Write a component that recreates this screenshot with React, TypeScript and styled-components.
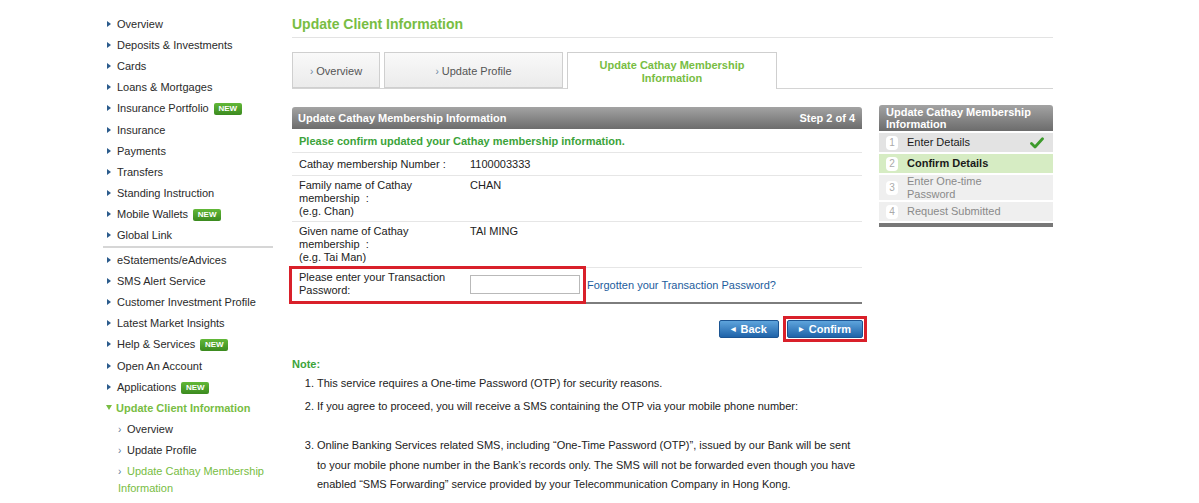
import React from 'react'
import styled, { createGlobalStyle } from 'styled-components'

const GlobalStyle = createGlobalStyle`
  html, body {
    margin: 0;
    padding: 0;
    background: #fff;
  }
  body {
    font-family: "Liberation Sans", Arial, Helvetica, sans-serif;
    font-size: 11px;
    color: #222;
  }
`

const colors = {
  green: '#78bd43',
  darkGreen: '#3ca33a',
  blue: '#1d5c9c',
  red: '#d9202a',
  navArrow: '#2b5b8c',
}

const Page = styled.div`
  display: flex;
  align-items: flex-start;
  gap: 19px;
  width: 1199px;
  height: 503px;
  padding-left: 103px;
  box-sizing: border-box;
  overflow: hidden;
`

/* ---------- sidebar ---------- */

const Sidebar = styled.nav`
  width: 170px;
  flex-shrink: 0;
  padding-top: 13px;
`

const NavItem = styled.div<{ $sub?: boolean; $active?: boolean; $open?: boolean }>`
  padding: ${p => (p.$sub ? 2 : 2.6)}px 0 ${p => (p.$sub ? 2 : 2.6)}px ${p => (p.$sub ? 15 : p.$open ? 3 : 4)}px;
  line-height: 16px;
  color: ${p => (p.$active || p.$open ? colors.green : '#2a2a2a')};
  font-weight: ${p => (p.$open ? 'bold' : 'normal')};
`

const NavArrow = styled.span`
  display: inline-block;
  width: 0;
  height: 0;
  border-left: 4px solid ${colors.navArrow};
  border-top: 3px solid transparent;
  border-bottom: 3px solid transparent;
  margin-right: 6px;
  vertical-align: 1px;
`

const NavArrowDown = styled.span`
  display: inline-block;
  width: 0;
  height: 0;
  border-top: 5px solid ${colors.green};
  border-left: 3.5px solid transparent;
  border-right: 3.5px solid transparent;
  margin-right: 4px;
  vertical-align: 2px;
`

const SubChevron = styled.span`
  display: inline-block;
  width: 9px;
  color: #5a7a9a;
  font-size: 10px;
`

const NavDivider = styled.div`
  height: 2px;
  margin-bottom: 1px;
  background: #d6d6d6;
`

const NewBadge = styled.span`
  display: inline-block;
  width: 28px;
  height: 12px;
  margin-left: 5px;
  vertical-align: 1px;
  border-radius: 2px;
  background: linear-gradient(#62b838, #3b8a1f);
  color: #fff;
  font-size: 8px;
  font-weight: bold;
  line-height: 12px;
  text-align: center;
`

/* ---------- main ---------- */

const Main = styled.main`
  width: 761px;
  flex-shrink: 0;
`

const Title = styled.h1`
  margin: 0;
  padding: 16px 0 4px;
  font-size: 14px;
  line-height: 17px;
  font-weight: bold;
  color: ${colors.green};
  border-bottom: 1px solid #e3e3e3;
`

const Tabs = styled.div`
  display: flex;
  align-items: flex-end;
  gap: 4px;
  margin-top: 14px;
  height: 36px;
  border-bottom: 1px solid #d4d4d4;
`

const Tab = styled.div<{ $width: number; $active?: boolean }>`
  width: ${p => p.$width}px;
  height: ${p => (p.$active ? 37 : 36)}px;
  box-sizing: border-box;
  margin-bottom: ${p => (p.$active ? -1 : 0)}px;
  display: flex;
  align-items: center;
  justify-content: center;
  text-align: center;
  border: 1px solid #cfcfcf;
  border-bottom: ${p => (p.$active ? 'none' : '1px solid #cfcfcf')};
  background: ${p => (p.$active ? '#fff' : 'linear-gradient(#f9f9f9, #ebebeb)')};
  color: ${p => (p.$active ? colors.green : '#555')};
  font-weight: ${p => (p.$active ? 'bold' : 'normal')};
  line-height: 13px;
  padding-top: ${p => (p.$active ? 1 : 2)}px;
`

const TabChevron = styled.span`
  color: #6b86a3;
  font-size: 10px;
  margin-right: 3px;
`

const Content = styled.div`
  display: flex;
  align-items: flex-start;
  gap: 17px;
  margin-top: 18px;
`

const LeftCol = styled.div`
  width: 570px;
  flex-shrink: 0;
`

const PanelHeader = styled.div`
  height: 22px;
  display: flex;
  align-items: center;
  justify-content: space-between;
  padding: 0 7px 0 6px;
  border-radius: 3px 3px 0 0;
  background: linear-gradient(#a3a3a3, #6c6c6c);
  color: #fff;
  font-weight: bold;
`

const ConfirmText = styled.div`
  padding: 6px 7px 4px;
  line-height: 13px;
  color: ${colors.darkGreen};
  font-weight: bold;
  border-bottom: 1px solid #e6e6e6;
`

const Row = styled.div<{ $padTop?: number; $padBottom?: number }>`
  display: flex;
  line-height: 13px;
  padding: ${p => p.$padTop ?? 3.5}px 0 ${p => p.$padBottom ?? 2.5}px;
  border-bottom: 1px solid #e6e6e6;
`

const Label = styled.div`
  width: 178px;
  flex-shrink: 0;
  box-sizing: border-box;
  padding: 0 11px 0 7px;
`

const Value = styled.div`
  flex: 1;
`

const PasswordRow = styled.div`
  display: flex;
  height: 34px;
  border-bottom: 2px solid #7d7d7d;
`

const Highlight = styled.div`
  display: flex;
  height: calc(100% + 4px);
  margin: -2px 0 0 -3px;
  padding-right: 3px;
  box-sizing: border-box;
  border: 3px solid ${colors.red};
  line-height: 13px;
`

const PasswordLabel = styled(Label)`
  padding-top: 2px;
`

const PasswordInput = styled.input`
  align-self: center;
  width: 110px;
  height: 19px;
  box-sizing: border-box;
  margin: 0;
  border: 1px solid #b9b9b9;
  background: #fff;
`

const ForgotLink = styled.a`
  align-self: center;
  margin-left: 1px;
  color: ${colors.blue};
  text-decoration: none;
  cursor: pointer;
`

const ButtonRow = styled.div`
  display: flex;
  justify-content: flex-end;
  align-items: center;
  margin-top: 12px;
`

const ButtonFrame = styled.div`
  display: flex;
  padding: 1px;
  margin: 0 -5px 0 4px;
  border: 3px solid ${colors.red};
`

const Button = styled.button`
  display: flex;
  align-items: center;
  gap: 5px;
  height: 18px;
  padding: 0 11px;
  border: 1px solid #1c5593;
  border-radius: 2px;
  background: linear-gradient(#5ea4dc, #1f63a9);
  color: #fff;
  font-family: inherit;
  font-size: 11px;
  font-weight: bold;
  cursor: pointer;
`

const ButtonArrow = styled.span`
  font-size: 6px;
`

const Note = styled.div`
  margin-top: 13px;
  line-height: 19.5px;
`

const NoteTitle = styled.div`
  color: ${colors.darkGreen};
  font-weight: bold;
`

const NoteList = styled.ol`
  margin: 0;
  padding-left: 25px;
`

const NoteItem = styled.li<{ $gap?: number }>`
  margin-bottom: ${p => p.$gap ?? 3.5}px;
`

/* ---------- step panel ---------- */

const StepPanel = styled.aside`
  width: 174px;
  flex-shrink: 0;
  margin-top: -2px;
`

const StepHeader = styled.div`
  padding: 1px 6px 1px 7px;
  border-radius: 3px 3px 0 0;
  background: linear-gradient(#a3a3a3, #6c6c6c);
  color: #fff;
  font-weight: bold;
  line-height: 12px;
`

type StepState = 'done' | 'current' | 'todo'

const Step = styled.div<{ $state: StepState }>`
  display: flex;
  align-items: center;
  min-height: 19px;
  box-sizing: border-box;
  margin-top: 2px;
  padding: 0 9px 0 7px;
  line-height: 12.5px;
  background: ${p => (p.$state === 'current' ? '#d6ecc3' : p.$state === 'done' ? '#e3e3e3' : '#efefef')};
  color: ${p => (p.$state === 'todo' ? '#8a8a8a' : '#1a1a1a')};
  font-weight: ${p => (p.$state === 'current' ? 'bold' : 'normal')};
`

const StepNum = styled.span`
  width: 12px;
  height: 14px;
  flex-shrink: 0;
  margin-right: 9px;
  border-radius: 4px;
  background: #fff;
  color: #aaa;
  font-size: 10px;
  font-weight: normal;
  line-height: 14px;
  text-align: center;
`

const StepLabel = styled.span`
  flex: 1;
  padding-right: 8px;
`

const StepCheck = styled.span`
  width: 14px;
  height: 12px;
  flex-shrink: 0;
  display: flex;
`

const StepFoot = styled.div`
  height: 4px;
  margin-top: 2px;
  background: #777;
`

const CheckIcon = () => (
  <svg width="14" height="12" viewBox="0 0 14 12">
    <path d="M1.5 6.5 L5 10 L12.5 1.8" fill="none" stroke="#3d9a2b" strokeWidth="2.8" strokeLinecap="round" strokeLinejoin="round" />
  </svg>
)

const mainNav: { label: string; isNew?: boolean }[] = [
  { label: 'Overview' },
  { label: 'Deposits & Investments' },
  { label: 'Cards' },
  { label: 'Loans & Mortgages' },
  { label: 'Insurance Portfolio', isNew: true },
  { label: 'Insurance' },
  { label: 'Payments' },
  { label: 'Transfers' },
  { label: 'Standing Instruction' },
  { label: 'Mobile Wallets', isNew: true },
  { label: 'Global Link' },
]

const serviceNav: { label: string; isNew?: boolean }[] = [
  { label: 'eStatements/eAdvices' },
  { label: 'SMS Alert Service' },
  { label: 'Customer Investment Profile' },
  { label: 'Latest Market Insights' },
  { label: 'Help & Services', isNew: true },
  { label: 'Open An Account' },
  { label: 'Applications', isNew: true },
]

const subNav = [
  { label: 'Overview' },
  { label: 'Update Profile' },
  { label: 'Update Cathay Membership Information', active: true },
]

const steps: { label: string; state: StepState }[] = [
  { label: 'Enter Details', state: 'done' },
  { label: 'Confirm Details', state: 'current' },
  { label: 'Enter One-time Password', state: 'todo' },
  { label: 'Request Submitted', state: 'todo' },
]

const App = () => {
  return (
    <>
      <GlobalStyle />
      <Page>
        <Sidebar>
          {mainNav.map(item => (
            <NavItem key={item.label}>
              <NavArrow />
              {item.label}
              {item.isNew && <NewBadge>NEW</NewBadge>}
            </NavItem>
          ))}
          <NavDivider />
          {serviceNav.map(item => (
            <NavItem key={item.label}>
              <NavArrow />
              {item.label}
              {item.isNew && <NewBadge>NEW</NewBadge>}
            </NavItem>
          ))}
          <NavItem $open>
            <NavArrowDown />
            Update Client Information
          </NavItem>
          {subNav.map(item => (
            <NavItem key={item.label} $sub $active={item.active}>
              <SubChevron>›</SubChevron>
              {item.label}
            </NavItem>
          ))}
          <NavItem>
            <NavArrow />
            Convert ATM Card
          </NavItem>
        </Sidebar>

        <Main>
          <Title>Update Client Information</Title>
          <Tabs>
            <Tab $width={88}>
              <span><TabChevron>›</TabChevron>Overview</span>
            </Tab>
            <Tab $width={179}>
              <span><TabChevron>›</TabChevron>Update Profile</span>
            </Tab>
            <Tab $width={210} $active>
              Update Cathay Membership
              <br />
              Information
            </Tab>
          </Tabs>

          <Content>
            <LeftCol>
              <PanelHeader>
                <span>Update Cathay Membership Information</span>
                <span>Step 2 of 4</span>
              </PanelHeader>
              <ConfirmText>Please confirm updated your Cathay membership information.</ConfirmText>
              <Row $padTop={4.5} $padBottom={4}>
                <Label>Cathay membership Number :</Label>
                <Value>1100003333</Value>
              </Row>
              <Row>
                <Label>
                  Family name of Cathay membership &nbsp;:
                  <br />
                  (e.g. Chan)
                </Label>
                <Value>CHAN</Value>
              </Row>
              <Row>
                <Label>
                  Given name of Cathay membership &nbsp;:
                  <br />
                  (e.g. Tai Man)
                </Label>
                <Value>TAI MING</Value>
              </Row>
              <PasswordRow>
                <Highlight>
                  <PasswordLabel>Please enter your Transaction Password:</PasswordLabel>
                  <PasswordInput type="password" />
                </Highlight>
                <ForgotLink>Forgotten your Transaction Password?</ForgotLink>
              </PasswordRow>

              <ButtonRow>
                <Button>
                  <ButtonArrow>◀</ButtonArrow>Back
                </Button>
                <ButtonFrame>
                  <Button>
                    <ButtonArrow>▶</ButtonArrow>Confirm
                  </Button>
                </ButtonFrame>
              </ButtonRow>

              <Note>
                <NoteTitle>Note:</NoteTitle>
                <NoteList>
                  <NoteItem>This service requires a One-time Password (OTP) for security reasons.</NoteItem>
                  <NoteItem $gap={19.5}>
                    If you agree to proceed, you will receive a SMS containing the OTP via your mobile phone number:
                  </NoteItem>
                  <NoteItem>
                    Online Banking Services related SMS, including “One-Time Password (OTP)”, issued by our Bank will be sent
                    to your mobile phone number in the Bank’s records only. The SMS will not be forwarded even though you have
                    enabled “SMS Forwarding” service provided by your Telecommunication Company in Hong Kong.
                  </NoteItem>
                  <NoteItem>
                    Delivery of SMS may be subject to delayed transmission due to network traffic or the public nature of the
                    Internet.
                  </NoteItem>
                </NoteList>
              </Note>
            </LeftCol>

            <StepPanel>
              <StepHeader>Update Cathay Membership Information</StepHeader>
              {steps.map((step, index) => (
                <Step key={step.label} $state={step.state}>
                  <StepNum>{index + 1}</StepNum>
                  <StepLabel>{step.label}</StepLabel>
                  <StepCheck>{step.state === 'done' && <CheckIcon />}</StepCheck>
                </Step>
              ))}
              <StepFoot />
            </StepPanel>
          </Content>
        </Main>
      </Page>
    </>
  )
}

export default App
